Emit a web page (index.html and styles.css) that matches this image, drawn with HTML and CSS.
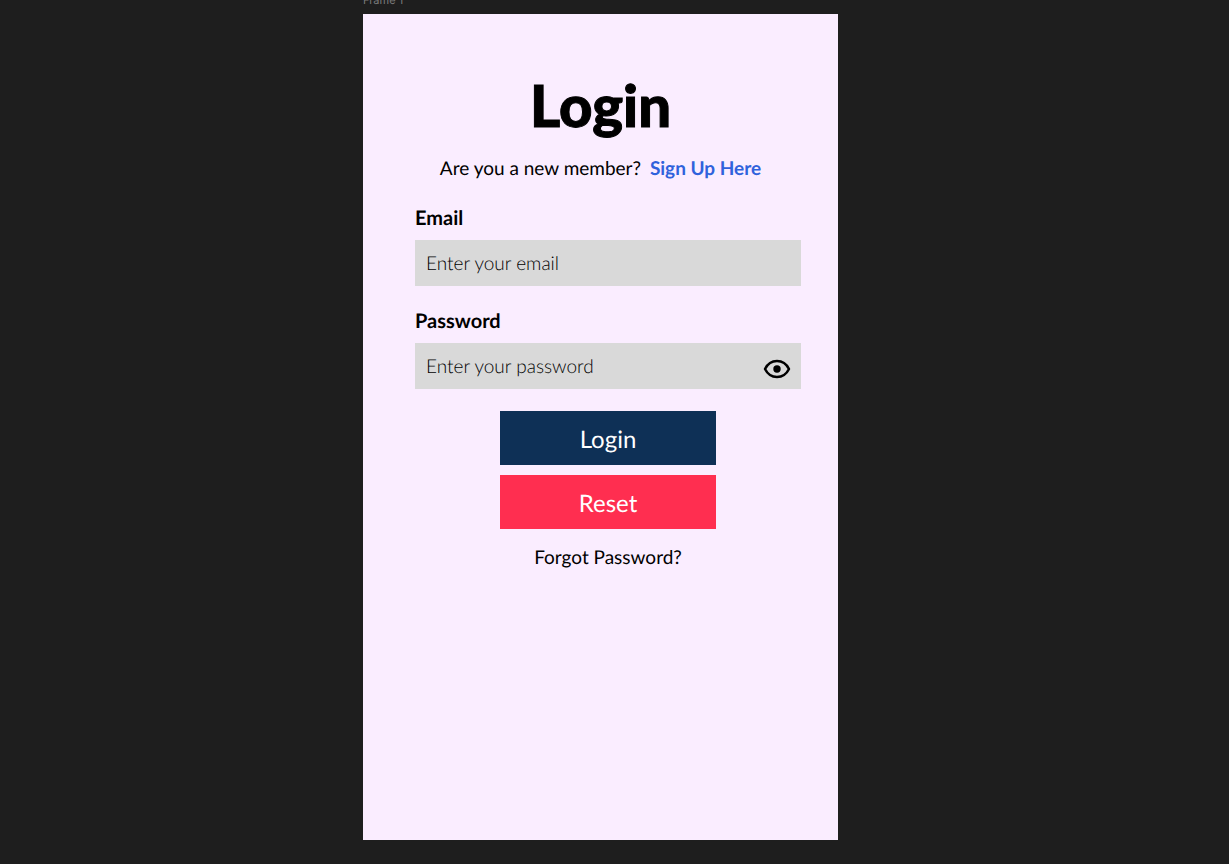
FILE: index.html
```html
<!DOCTYPE html>
<html lang="en">
<head>
<meta charset="utf-8">
<meta name="viewport" content="width=device-width, initial-scale=1">
<title>Login</title>
<link rel="stylesheet" href="styles.css">
</head>
<body>
<main class="canvas">
  <div class="frame">
    <div class="frame-name">Frame 1</div>
    <section class="card">
      <h1 class="title">Login</h1>
      <p class="signup">Are you a new member? <a class="signup-link" href="#">Sign Up Here</a></p>
      <form class="form">
        <label class="label" for="email">Email</label>
        <div class="field">
          <input class="input" id="email" type="email" placeholder="Enter your email">
        </div>
        <label class="label" for="password">Password</label>
        <div class="field">
          <input class="input" id="password" type="password" placeholder="Enter your password">
          <button class="reveal" type="button" aria-label="Show password">
            <svg class="eye" viewBox="0 0 28 20" aria-hidden="true">
              <path d="M2 10C4.500 5 8.800 2 14 2S23.500 5 26 10C23.500 15 19.200 18 14 18S4.500 15 2 10Z" fill="none" stroke="#000" stroke-width="2.500" stroke-linejoin="round"/>
              <circle cx="14" cy="10" r="3.700"/>
            </svg>
          </button>
        </div>
        <div class="actions">
          <button class="button button-login" type="submit">Login</button>
          <button class="button button-reset" type="reset">Reset</button>
          <a class="forgot" href="#">Forgot Password?</a>
        </div>
      </form>
    </section>
  </div>
</main>
</body>
</html>
```
FILE: styles.css
```css
* {
  box-sizing: border-box;
}

body {
  margin: 0;
  background: #1e1e1e;
  color: #000;
  font-family: Lato, "Open Sans", sans-serif;
  font-size: 19px;
  line-height: 24px;
  text-rendering: geometricPrecision;
}

.canvas {
  display: flex;
  flex-direction: column;
  align-items: center;
  min-height: 100vh;
  padding: 0 28px 24px 0;
  overflow: hidden;
}

.frame {
  display: flex;
  flex: 1;
  flex-direction: column;
  width: 100%;
  max-width: 475px;
}

.frame-name {
  height: 22px;
  margin-top: -8px;
  color: #7a7a7a;
  font-family: Inter, sans-serif;
  font-size: 11px;
  line-height: 16px;
}

.card {
  flex: 1;
  padding: 56px 37px 56px 52px;
  background: #faedff;
}

.title {
  margin: 0 15px 15px 0;
  font-size: 58px;
  font-weight: 900;
  line-height: 72px;
  text-align: center;
  -webkit-text-stroke: 1px #000;
}

.signup {
  margin: 0 15px 24px 0;
  text-align: center;
}

.signup-link {
  margin-left: 4px;
  color: #2f62dc;
  font-weight: 700;
  text-decoration: none;
}

.label {
  display: block;
  margin-bottom: 10px;
  padding-top: 1px;
  font-size: 20px;
  font-weight: 700;
}

.field {
  display: flex;
  align-items: center;
  height: 46px;
  margin-bottom: 22px;
  background: #d9d9d9;
}

.input {
  flex: 1;
  min-width: 0;
  height: 100%;
  padding: 0 11px;
  border: 0;
  background: transparent;
  color: #000;
  font: inherit;
  font-weight: 300;
  text-rendering: inherit;
}

.input::placeholder {
  color: #000;
  opacity: 1;
}

.reveal {
  display: flex;
  margin: 6px 10px 0 0;
  padding: 0;
  border: 0;
  background: transparent;
  cursor: pointer;
}

.eye {
  display: block;
  width: 28px;
  height: 20px;
}

.actions {
  display: flex;
  flex-direction: column;
  align-items: center;
  gap: 10px;
}

.button {
  width: 56%;
  height: 54px;
  padding: 3px 0 0;
  border: 0;
  color: #fff;
  font-family: inherit;
  font-size: 24px;
  line-height: 30px;
  text-rendering: inherit;
  cursor: pointer;
}

.button-login {
  background: #0e3056;
}

.button-reset {
  background: #ff2e50;
}

.forgot {
  margin-top: 7px;
  color: #000;
  text-decoration: none;
}
```
